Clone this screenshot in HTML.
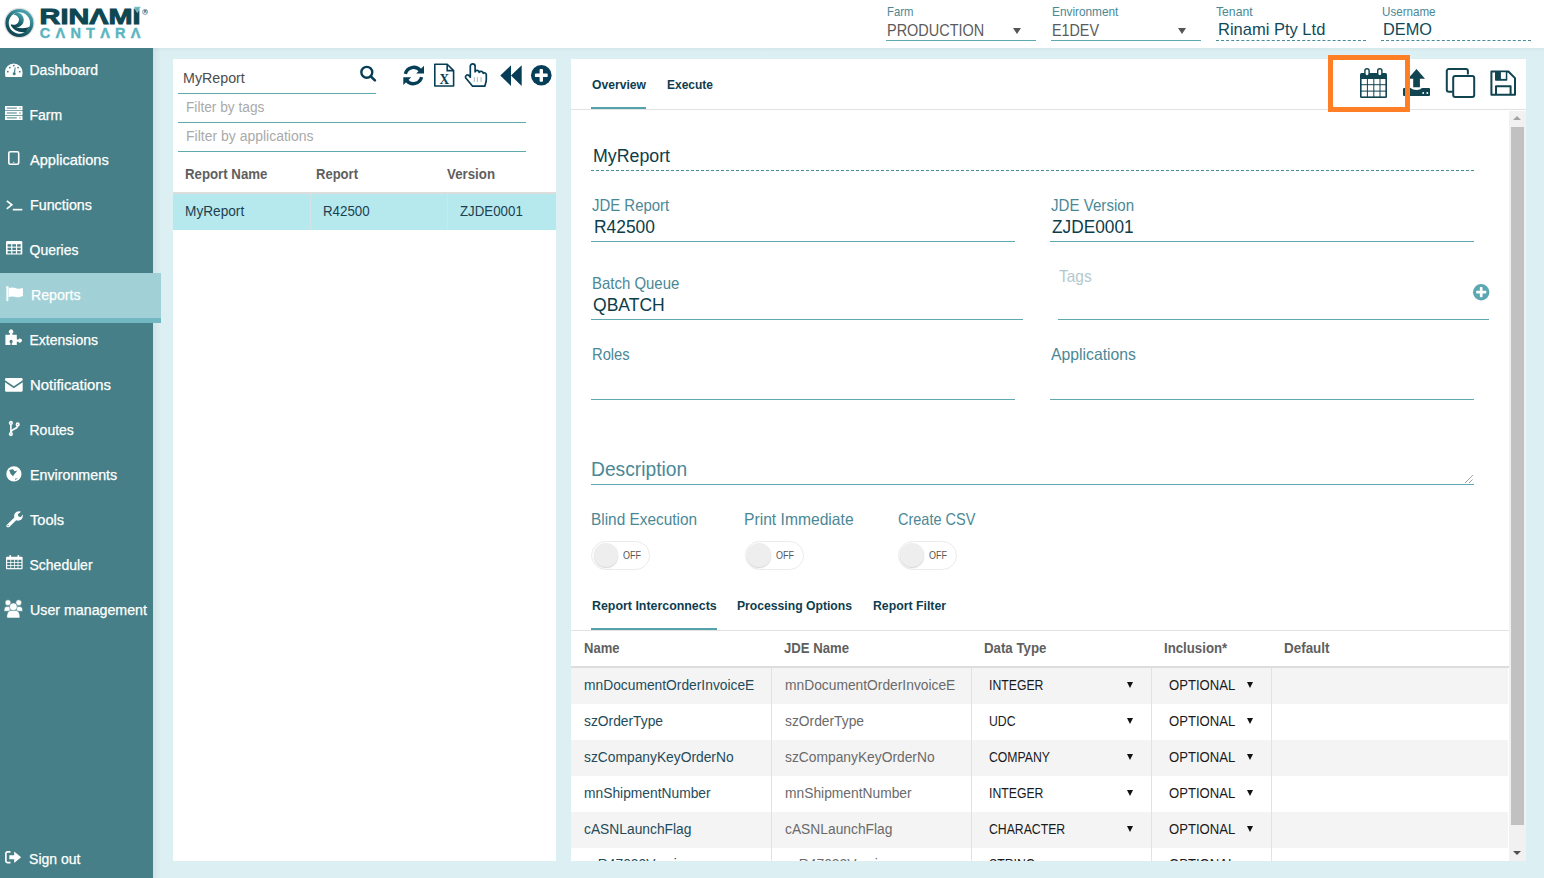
<!DOCTYPE html><html><head><meta charset="utf-8"><style>
html,body{margin:0;padding:0;width:1544px;height:878px;overflow:hidden;background:#fff;}
body{position:relative;font-family:"Liberation Sans",sans-serif;}
.t{position:absolute;white-space:nowrap;}
svg{position:absolute;overflow:visible}
</style></head><body>
<svg style="left:0.00px;top:0.00px" width="160.00" height="48.00" viewBox="0 0 160.00 48.00" ><defs><linearGradient id="lg" x1="0.8" y1="0" x2="0.2" y2="1"><stop offset="0" stop-color="#4fb0ba"/><stop offset="0.55" stop-color="#1d6672"/><stop offset="1" stop-color="#0b3f4b"/></linearGradient></defs>
<circle cx="19.4" cy="23" r="15.3" fill="#e2e0e0"/>
<circle cx="19.4" cy="23" r="14" fill="url(#lg)"/>
<circle cx="19.4" cy="23" r="10.7" fill="#fff"/>
<path d="M16.2,12.3 A7.6,7.6 0 1 1 10.7,25.2 L11.6,24.2 A5,5 0 1 0 13.4,14.8 Z" fill="url(#lg)"/>
<path d="M10.7,24.6 C12.5,30 18.5,33 25.5,32.2 L30.2,26.6 C25,29.3 16.5,29 10.7,24.6 Z" fill="#0e4651"/>
<text x="39.6" y="23.7" font-family="Liberation Sans" font-weight="bold" font-size="21.3" fill="#0e4651" stroke="#0e4651" stroke-width="0.9" textLength="101" lengthAdjust="spacingAndGlyphs">RIN&#923;MI</text>
<polygon points="133.7,6.8 140.9,6.8 137.3,12.6" fill="#5ab5c0" stroke="#fff" stroke-width="0.4"/>
<circle cx="145.1" cy="11.9" r="2.5" fill="none" stroke="#0e4651" stroke-width="0.5"/><text x="143.9" y="13.3" font-family="Liberation Sans" font-weight="bold" font-size="3.6" fill="#0e4651">R</text>
<text x="39.8" y="37.8" font-family="Liberation Sans" font-weight="bold" font-size="14.5" fill="#5ab5c0" stroke="#5ab5c0" stroke-width="0.4" textLength="100.6" lengthAdjust="spacing">C&#923;NT&#923;R&#923;</text></svg>
<div class="t" style="left:886.70px;top:5.00px;font-size:13.00px;line-height:13.00px;color:#4b8896;transform:scaleX(0.8706);transform-origin:0 0;">Farm</div>
<div class="t" style="left:886.70px;top:22.00px;font-size:17.00px;line-height:17.00px;color:#5b5b5b;transform:scaleX(0.8514);transform-origin:0 0;">PRODUCTION</div>
<div style="position:absolute;left:1013.00px;top:28.00px;width:8.00px;height:6.00px;background:none;border-left:4px solid transparent;border-right:4px solid transparent;border-top:6px solid #555;width:0;height:0;"></div>
<div style="position:absolute;left:886.00px;top:40.00px;width:150.00px;height:1.00px;background:#5fa9b3"></div>
<div class="t" style="left:1051.60px;top:5.00px;font-size:13.00px;line-height:13.00px;color:#4b8896;transform:scaleX(0.9097);transform-origin:0 0;">Environment</div>
<div class="t" style="left:1051.90px;top:22.00px;font-size:17.00px;line-height:17.00px;color:#5b5b5b;transform:scaleX(0.8429);transform-origin:0 0;">E1DEV</div>
<div style="position:absolute;left:1178.00px;top:28.00px;width:8.00px;height:6.00px;background:none;border-left:4px solid transparent;border-right:4px solid transparent;border-top:6px solid #555;width:0;height:0;"></div>
<div style="position:absolute;left:1051.00px;top:40.00px;width:150.00px;height:1.00px;background:#5fa9b3"></div>
<div class="t" style="left:1216.30px;top:5.00px;font-size:13.00px;line-height:13.00px;color:#4b8896;transform:scaleX(0.9377);transform-origin:0 0;">Tenant</div>
<div class="t" style="left:1218.00px;top:21.00px;font-size:17.00px;line-height:17.00px;color:#0f4a5a;transform:scaleX(0.9707);transform-origin:0 0;">Rinami Pty Ltd</div>
<div style="position:absolute;left:1216.00px;top:40.00px;width:150.00px;height:1.00px;border-top:1px dashed #4a8c96;height:0;"></div>
<div class="t" style="left:1381.60px;top:5.00px;font-size:13.00px;line-height:13.00px;color:#4b8896;transform:scaleX(0.8922);transform-origin:0 0;">Username</div>
<div class="t" style="left:1382.70px;top:21.00px;font-size:17.00px;line-height:17.00px;color:#0f4a5a;transform:scaleX(0.9608);transform-origin:0 0;">DEMO</div>
<div style="position:absolute;left:1381.00px;top:40.00px;width:150.00px;height:1.00px;border-top:1px dashed #4a8c96;height:0;"></div>
<div style="position:absolute;left:0.00px;top:48.00px;width:1544.00px;height:830.00px;background:#dcf0f3"></div>
<div style="position:absolute;left:153.00px;top:48.00px;width:1391.00px;height:4.00px;background:linear-gradient(rgba(0,0,0,0.035),rgba(0,0,0,0));"></div>
<div style="position:absolute;left:153.00px;top:48.00px;width:8.00px;height:830.00px;background:linear-gradient(90deg,rgba(0,0,0,0.06),rgba(0,0,0,0));"></div>
<div style="position:absolute;left:0.00px;top:48.00px;width:153.00px;height:830.00px;background:#467f87"></div>
<div style="position:absolute;left:0.00px;top:273.00px;width:161.00px;height:45.00px;background:#a1d1d7"></div>
<div style="position:absolute;left:0.00px;top:318.00px;width:161.00px;height:5.00px;background:#72b8c3"></div>
<div class="t" style="left:29.50px;top:63.00px;font-size:14.00px;line-height:14.00px;color:#ffffff;-webkit-text-stroke:0.25px #fff;">Dashboard</div>
<div class="t" style="left:29.50px;top:108.00px;font-size:14.00px;line-height:14.00px;color:#ffffff;-webkit-text-stroke:0.25px #fff;">Farm</div>
<div class="t" style="left:29.50px;top:153.00px;font-size:14.00px;line-height:14.00px;color:#ffffff;transform:scaleX(1.0425);transform-origin:0 0;-webkit-text-stroke:0.25px #fff;">Applications</div>
<div class="t" style="left:29.50px;top:198.00px;font-size:14.00px;line-height:14.00px;color:#ffffff;transform:scaleX(1.0199);transform-origin:0 0;-webkit-text-stroke:0.25px #fff;">Functions</div>
<div class="t" style="left:29.50px;top:243.00px;font-size:14.00px;line-height:14.00px;color:#ffffff;-webkit-text-stroke:0.25px #fff;">Queries</div>
<div class="t" style="left:30.90px;top:288.00px;font-size:14.00px;line-height:14.00px;color:#ffffff;transform:scaleX(1.0095);transform-origin:0 0;-webkit-text-stroke:0.25px #fff;">Reports</div>
<div class="t" style="left:29.50px;top:333.00px;font-size:14.00px;line-height:14.00px;color:#ffffff;-webkit-text-stroke:0.25px #fff;">Extensions</div>
<div class="t" style="left:29.50px;top:378.00px;font-size:14.00px;line-height:14.00px;color:#ffffff;transform:scaleX(1.0621);transform-origin:0 0;-webkit-text-stroke:0.25px #fff;">Notifications</div>
<div class="t" style="left:29.50px;top:423.00px;font-size:14.00px;line-height:14.00px;color:#ffffff;-webkit-text-stroke:0.25px #fff;">Routes</div>
<div class="t" style="left:29.50px;top:468.00px;font-size:14.00px;line-height:14.00px;color:#ffffff;transform:scaleX(1.0186);transform-origin:0 0;-webkit-text-stroke:0.25px #fff;">Environments</div>
<div class="t" style="left:29.50px;top:513.00px;font-size:14.00px;line-height:14.00px;color:#ffffff;transform:scaleX(1.0462);transform-origin:0 0;-webkit-text-stroke:0.25px #fff;">Tools</div>
<div class="t" style="left:29.50px;top:558.00px;font-size:14.00px;line-height:14.00px;color:#ffffff;-webkit-text-stroke:0.25px #fff;">Scheduler</div>
<div class="t" style="left:29.50px;top:603.00px;font-size:14.00px;line-height:14.00px;color:#ffffff;transform:scaleX(1.0158);transform-origin:0 0;-webkit-text-stroke:0.25px #fff;">User management</div>
<svg style="left:4.80px;top:62.60px" width="17.50" height="14.00" viewBox="0 0 17.50 14.00" ><path d="M0.6,14 C0.1,12.6 0,11 0,9.2 A8.75,8.75 0 0 1 17.5,9.2 C17.5,11 17.4,12.6 16.9,14 Z" fill="#fff"/>
<g fill="#467f87"><circle cx="4.8" cy="4.6" r="0.9"/><circle cx="8.8" cy="2.6" r="0.9"/><circle cx="13.1" cy="4.6" r="0.9"/><circle cx="2.8" cy="8.7" r="0.9"/><circle cx="14.7" cy="8.7" r="0.9"/><circle cx="9.2" cy="10.8" r="1.5"/><path d="M8.5,10.6 L9.8,4.2 L10.6,4.4 L10,10.9 Z"/></g></svg>
<svg style="left:4.80px;top:106.00px" width="17.50" height="14.00" viewBox="0 0 17.50 14.00" ><rect x="0" y="0" width="17.5" height="4.2" fill="#fff"/><rect x="0" y="4.9" width="17.5" height="4.2" fill="#fff"/><rect x="0" y="9.8" width="17.5" height="4.2" fill="#fff"/>
<g fill="#467f87"><rect x="1.8" y="1.6" width="10" height="1"/><rect x="1.8" y="6.5" width="10" height="1"/><rect x="1.8" y="11.4" width="10" height="1"/><circle cx="15" cy="2.1" r="0.7"/><circle cx="15" cy="7" r="0.7"/><circle cx="15" cy="11.9" r="0.7"/></g></svg>
<svg style="left:7.80px;top:151.00px" width="11.50" height="14.00" viewBox="0 0 11.50 14.00" ><rect x="0.8" y="0.8" width="9.9" height="12.4" rx="1.5" fill="none" stroke="#fff" stroke-width="1.6"/><circle cx="5.75" cy="11.3" r="0.6" fill="#fff"/></svg>
<svg style="left:5.50px;top:199.50px" width="16.50" height="11.00" viewBox="0 0 16.50 11.00" ><path d="M0.8,0.8 L5.8,4.8 L0.8,8.8" fill="none" stroke="#fff" stroke-width="1.7"/><rect x="6.8" y="8.8" width="9.5" height="1.7" fill="#fff"/></svg>
<svg style="left:5.50px;top:241.20px" width="16.30" height="13.60" viewBox="0 0 16.30 13.60" ><rect x="0" y="0" width="16.3" height="13.6" rx="1.2" fill="#fff"/>
<g fill="#467f87"><rect x="1.6" y="3.2" width="3.6" height="2.4"/><rect x="6.35" y="3.2" width="3.6" height="2.4"/><rect x="11.1" y="3.2" width="3.6" height="2.4"/>
<rect x="1.6" y="6.7" width="3.6" height="2.4"/><rect x="6.35" y="6.7" width="3.6" height="2.4"/><rect x="11.1" y="6.7" width="3.6" height="2.4"/>
<rect x="1.6" y="10.2" width="3.6" height="2.2"/><rect x="6.35" y="10.2" width="3.6" height="2.2"/><rect x="11.1" y="10.2" width="3.6" height="2.2"/></g></svg>
<svg style="left:6.40px;top:286.00px" width="17.50" height="15.50" viewBox="0 0 17.50 15.50" ><rect x="0.4" y="1" width="1.9" height="14.2" rx="0.6" fill="#fff"/><circle cx="1.35" cy="1.2" r="1.2" fill="#fff"/>
<path d="M2.5,2.2 C5,0.9 8,1.3 10.2,2.3 C12.5,3.3 14.6,2.6 16.9,1.9 L16.9,10.1 C14.6,10.9 12.4,11.9 10.2,11.1 C8,10.3 5,10.1 2.5,11 Z" fill="#fff"/></svg>
<svg style="left:5.20px;top:330.20px" width="17.50" height="15.30" viewBox="0 0 17.50 15.30" ><path d="M0.4,4.8 H4.9 V3.6 A2.2,2.2 0 1 1 7.3,3.6 V4.8 H11.8 V9.5 H13.3 A2,2 0 1 1 13.3,11.7 H11.8 V14.9 H6.8 V13 A1.6,1.6 0 1 0 5.4,13 V14.9 H0.4 Z" fill="#fff"/></svg>
<svg style="left:4.80px;top:377.50px" width="17.70" height="13.70" viewBox="0 0 17.70 13.70" ><path d="M0,1.5 A1.5,1.5 0 0 1 1.5,0 H16.2 A1.5,1.5 0 0 1 17.7,1.5 V2.2 L8.85,8.2 L0,2.2 Z" fill="#fff"/><path d="M0,4.3 L8.85,10.2 L17.7,4.3 V12.2 A1.5,1.5 0 0 1 16.2,13.7 H1.5 A1.5,1.5 0 0 1 0,12.2 Z" fill="#fff"/></svg>
<svg style="left:8.50px;top:421.20px" width="10.60" height="15.00" viewBox="0 0 10.60 15.00" ><g fill="none" stroke="#fff" stroke-width="1.6"><circle cx="1.9" cy="1.9" r="1.3"/><circle cx="8.7" cy="3.4" r="1.3"/><circle cx="1.9" cy="13.1" r="1.3"/><path d="M1.9,3.2 V11.8"/><path d="M8.7,4.7 C8.7,8 2.5,8 1.9,11"/></g></svg>
<svg style="left:5.70px;top:465.70px" width="16.10" height="15.90" viewBox="0 0 16.10 15.90" ><circle cx="7.9" cy="7.9" r="7.6" fill="#fff"/><path d="M3.2,4.3 C4.5,3.2 6,3.2 7.2,3.4 L8.6,5.3 L11.4,4.4 L8,8.8 L7,10.2 L4.6,7.8 Z M9,12.7 L12,12.3 L9.4,13.9 Z" fill="#467f87"/></svg>
<svg style="left:5.70px;top:511.20px" width="16.80" height="16.30" viewBox="0 0 16.80 16.30" ><path d="M1.2,13.5 L8.3,6.5 C7.5,3.5 9.5,0.3 13,0.3 C13.8,0.3 14.5,0.5 15,0.8 L11.8,3.2 L12.5,5.5 L14.8,6.2 L16.6,3.5 C16.8,4 16.8,4.5 16.8,5 C16.8,8.5 13.3,10.5 10.2,9.3 L3.3,15.9 C2.5,16.6 1.2,16.4 0.6,15.8 C0,15.2 0.3,14.2 1.2,13.5 Z" fill="#fff"/><circle cx="2.1" cy="14.6" r="0.7" fill="#467f87"/></svg>
<svg style="left:5.50px;top:554.80px" width="16.60" height="14.30" viewBox="0 0 16.60 14.30" ><rect x="0" y="1.8" width="16.6" height="12.5" rx="1" fill="#fff"/><rect x="3.3" y="0" width="1.8" height="3.6" rx="0.9" fill="#fff"/><rect x="11.5" y="0" width="1.8" height="3.6" rx="0.9" fill="#fff"/>
<g fill="#467f87"><rect x="1.2" y="4.8" width="3.2" height="2.2"/><rect x="5.2" y="4.8" width="2.8" height="2.2"/><rect x="8.8" y="4.8" width="2.8" height="2.2"/><rect x="12.4" y="4.8" width="3" height="2.2"/>
<rect x="1.2" y="7.8" width="3.2" height="2.3"/><rect x="5.2" y="7.8" width="2.8" height="2.3"/><rect x="8.8" y="7.8" width="2.8" height="2.3"/><rect x="12.4" y="7.8" width="3" height="2.3"/>
<rect x="1.2" y="10.9" width="3.2" height="2.2"/><rect x="5.2" y="10.9" width="2.8" height="2.2"/><rect x="8.8" y="10.9" width="2.8" height="2.2"/><rect x="12.4" y="10.9" width="3" height="2.2"/></g></svg>
<svg style="left:4.10px;top:599.80px" width="18.70" height="18.00" viewBox="0 0 18.70 18.00" ><g fill="#fff" stroke="#467f87" stroke-width="0.55"><circle cx="4" cy="2.7" r="2.9"/><circle cx="14.7" cy="2.7" r="2.9"/><path d="M0,11.2 C0,8 1,6.6 3,6.6 H6.5 C6,8 6,9.7 6.8,11.2 Z"/><path d="M18.7,11.2 C18.7,8 17.7,6.6 15.7,6.6 H12.2 C12.7,8 12.7,9.7 11.9,11.2 Z"/><path d="M2.8,17 C2.8,12.5 5,10.5 7,10.5 H11.7 C13.7,10.5 15.9,12.5 15.9,17 C15.9,17.6 15.5,18 14.9,18 H3.8 C3.2,18 2.8,17.6 2.8,17 Z"/><circle cx="9.35" cy="6.8" r="3.9"/></g></svg>
<svg style="left:5.20px;top:851.40px" width="16.10" height="12.50" viewBox="0 0 16.10 12.50" ><path d="M5.5,0.9 H2.5 C1.5,0.9 0.9,1.5 0.9,2.5 V10 C0.9,11 1.5,11.6 2.5,11.6 H5.5" fill="none" stroke="#fff" stroke-width="1.7"/><path d="M4.3,4.2 H9.2 V0.5 L16.1,6.25 L9.2,12 V8.3 H4.3 Z" fill="#fff"/></svg>
<div class="t" style="left:29.10px;top:852.00px;font-size:14.00px;line-height:14.00px;color:#ffffff;-webkit-text-stroke:0.25px #fff;">Sign out</div>
<div style="position:absolute;left:173.00px;top:59.00px;width:383.00px;height:802.00px;background:#fff"></div>
<div class="t" style="left:183.40px;top:71.00px;font-size:14.00px;line-height:14.00px;color:#4d4d4d;transform:scaleX(1.0183);transform-origin:0 0;">MyReport</div>
<div style="position:absolute;left:178.00px;top:93.00px;width:198.00px;height:1.00px;background:#5fa9b3"></div>
<div class="t" style="left:185.90px;top:100.00px;font-size:14.00px;line-height:14.00px;color:#aaaaaa;transform:scaleX(0.9782);transform-origin:0 0;">Filter by tags</div>
<div style="position:absolute;left:178.00px;top:122.00px;width:348.00px;height:1.00px;background:#5fa9b3"></div>
<div class="t" style="left:185.90px;top:129.00px;font-size:14.00px;line-height:14.00px;color:#aaaaaa;transform:scaleX(0.9991);transform-origin:0 0;">Filter by applications</div>
<div style="position:absolute;left:178.00px;top:151.00px;width:348.00px;height:1.00px;background:#5fa9b3"></div>
<svg style="left:358.50px;top:64.50px" width="18.50" height="18.00" viewBox="0 0 18.50 18.00" ><circle cx="7.8" cy="7.3" r="5.45" fill="none" stroke="#063d57" stroke-width="2.4"/><path d="M11.8,11.4 L15.9,15.4" stroke="#063d57" stroke-width="2.6" stroke-linecap="round"/></svg>
<svg style="left:403.00px;top:65.00px" width="21.50" height="21.00" viewBox="0 0 21.50 21.00" ><g fill="none" stroke="#063d57" stroke-width="3.3"><path d="M2.4,8.8 A8.5,8.5 0 0 1 17.2,5.4"/><path d="M18.6,12.2 A8.5,8.5 0 0 1 3.8,15.6"/></g><polygon points="21,0.8 21,8.6 13.2,8.6" fill="#063d57"/><polygon points="0.3,12.2 8.2,12.2 0.3,20" fill="#063d57"/></svg>
<svg style="left:433.00px;top:63.00px" width="22.00" height="25.00" viewBox="0 0 22.00 25.00" ><path d="M1.8,1.2 H14.2 L20.6,7.6 V23 H1.8 Z" fill="none" stroke="#063d57" stroke-width="1.6" stroke-linejoin="round"/><path d="M14.2,1.2 V7.6 H20.6" fill="none" stroke="#063d57" stroke-width="1.6"/><text x="6.6" y="20.7" font-family="Liberation Serif" font-weight="bold" font-size="14.5" fill="#063d57" textLength="9.6" lengthAdjust="spacingAndGlyphs">X</text></svg>
<svg style="left:464.30px;top:63.00px" width="23.00" height="24.50" viewBox="0 0 23.00 24.50" ><path d="M6.3,14.2 V3.3 A2.4,2.4 0 0 1 11.1,3.3 V8.8 A2.1,2.1 0 0 1 15.2,9.4 A2.1,2.1 0 0 1 19.1,10.2 A2,2 0 0 1 22.3,11.6 V16.5 C22.3,19 21.5,20.5 20.8,23.2 H8.6 L1.6,14.8 A2.1,2.1 0 0 1 4.8,12.4 Z" fill="none" stroke="#063d57" stroke-width="1.7" stroke-linejoin="round"/><g stroke="#063d57" stroke-width="0.8" opacity="0.45"><path d="M10.3,14.2 V19"/><path d="M13.4,14.2 V19"/><path d="M17.1,14.2 V19"/></g></svg>
<svg style="left:499.50px;top:65.00px" width="22.00" height="21.50" viewBox="0 0 22.00 21.50" ><polygon points="0.3,10.6 11,0.3 11,21" fill="#063d57"/><polygon points="11,10.6 21.7,0.3 21.7,21" fill="#063d57"/></svg>
<svg style="left:529.80px;top:64.20px" width="22.60" height="22.60" viewBox="0 0 22.60 22.60" ><circle cx="11.30" cy="11.30" r="10.30" fill="#063d57"/><rect x="4.91" y="9.60" width="12.77" height="3.40" rx="0.85" fill="#fff"/><rect x="9.60" y="4.91" width="3.40" height="12.77" rx="0.85" fill="#fff"/></svg>
<div class="t" style="left:185.25px;top:167.00px;font-size:14.00px;line-height:14.00px;color:#5f5f5f;font-weight:bold;transform:scaleX(0.9455);transform-origin:0 0;">Report Name</div>
<div class="t" style="left:316.00px;top:167.00px;font-size:14.00px;line-height:14.00px;color:#5f5f5f;font-weight:bold;transform:scaleX(0.9310);transform-origin:0 0;">Report</div>
<div class="t" style="left:447.00px;top:167.00px;font-size:14.00px;line-height:14.00px;color:#5f5f5f;font-weight:bold;transform:scaleX(0.9491);transform-origin:0 0;">Version</div>
<div style="position:absolute;left:173.00px;top:192.00px;width:383.00px;height:2.00px;background:#dddddd"></div>
<div style="position:absolute;left:173.00px;top:194.00px;width:383.00px;height:36.00px;background:#b5e9ee"></div>
<div style="position:absolute;left:310.00px;top:194.00px;width:1.00px;height:36.00px;background:#d4e4e6"></div>
<div style="position:absolute;left:447.00px;top:194.00px;width:1.00px;height:36.00px;background:#d4e4e6"></div>
<div class="t" style="left:184.80px;top:204.00px;font-size:14.00px;line-height:14.00px;color:#1d3e50;transform:scaleX(0.9754);transform-origin:0 0;">MyReport</div>
<div class="t" style="left:323.30px;top:204.00px;font-size:14.00px;line-height:14.00px;color:#1d3e50;transform:scaleX(0.9503);transform-origin:0 0;">R42500</div>
<div class="t" style="left:460.00px;top:204.00px;font-size:14.00px;line-height:14.00px;color:#1d3e50;transform:scaleX(0.9494);transform-origin:0 0;">ZJDE0001</div>
<div style="position:absolute;left:571.00px;top:59.00px;width:955.00px;height:802.00px;background:#fff"></div>
<div class="t" style="left:591.70px;top:78.00px;font-size:13.00px;line-height:13.00px;color:#0e3d4f;font-weight:bold;transform:scaleX(0.9334);transform-origin:0 0;">Overview</div>
<div class="t" style="left:666.90px;top:78.00px;font-size:13.00px;line-height:13.00px;color:#0e3d4f;font-weight:bold;transform:scaleX(0.9227);transform-origin:0 0;">Execute</div>
<div style="position:absolute;left:591.00px;top:107.00px;width:55.00px;height:2.00px;background:#54a2ac"></div>
<div style="position:absolute;left:571.00px;top:109.00px;width:955.00px;height:1.00px;background:#e2e2e2"></div>
<svg style="left:1360.00px;top:68.00px" width="27.00" height="30.00" viewBox="0 0 27.00 30.00" ><rect x="0" y="5" width="27" height="25" rx="1.5" fill="#0f4450"/><rect x="1.60" y="11.00" width="5.30" height="5.20" fill="#fff"/><rect x="1.60" y="17.20" width="5.30" height="5.40" fill="#fff"/><rect x="1.60" y="23.60" width="5.30" height="4.80" fill="#fff"/><rect x="7.90" y="11.00" width="5.40" height="5.20" fill="#fff"/><rect x="7.90" y="17.20" width="5.40" height="5.40" fill="#fff"/><rect x="7.90" y="23.60" width="5.40" height="4.80" fill="#fff"/><rect x="14.30" y="11.00" width="5.20" height="5.20" fill="#fff"/><rect x="14.30" y="17.20" width="5.20" height="5.40" fill="#fff"/><rect x="14.30" y="23.60" width="5.20" height="4.80" fill="#fff"/><rect x="20.50" y="11.00" width="4.90" height="5.20" fill="#fff"/><rect x="20.50" y="17.20" width="4.90" height="5.40" fill="#fff"/><rect x="20.50" y="23.60" width="4.90" height="4.80" fill="#fff"/><rect x="4.2" y="0" width="5.6" height="8.5" rx="2.8" fill="#0f4450"/><rect x="5.6" y="1.4" width="2.8" height="5.8" rx="1.4" fill="#fff"/><rect x="17" y="0" width="5.6" height="8.5" rx="2.8" fill="#0f4450"/><rect x="18.4" y="1.4" width="2.8" height="5.8" rx="1.4" fill="#fff"/></svg>
<svg style="left:1403.00px;top:69.00px" width="27.00" height="27.00" viewBox="0 0 27.00 27.00" ><polygon points="13.5,0 22,9.7 16.9,9.7 16.9,18.3 10.2,18.3 10.2,9.7 5,9.7" fill="#0f4450"/><path d="M1,19 H7.6 C9,20.3 11,20.9 13.6,20.9 C16.2,20.9 17.6,20.3 19,19 H26 A1,1 0 0 1 27,20 V25.9 A1,1 0 0 1 26,26.9 H1 A1,1 0 0 1 0,25.9 V20 A1,1 0 0 1 1,19 Z" fill="#0f4450"/><circle cx="20.2" cy="24" r="0.95" fill="#fff"/><circle cx="24.3" cy="24" r="0.95" fill="#fff"/></svg>
<svg style="left:1445.00px;top:67.00px" width="31.00" height="32.00" viewBox="0 0 31.00 32.00" ><path d="M22.9,7.6 V4 A2,2 0 0 0 20.9,2 H3.8 A2,2 0 0 0 1.8,4 V22.8 A2,2 0 0 0 3.8,24.8 H7.8" fill="none" stroke="#0f4450" stroke-width="2"/><rect x="8.2" y="9" width="21" height="20.9" rx="2" fill="none" stroke="#0f4450" stroke-width="2"/></svg>
<svg style="left:1490.00px;top:70.00px" width="27.00" height="26.50" viewBox="0 0 27.00 26.50" ><path d="M1.4,1.5 H18.4 L25,8.1 V24.8 H1.4 Z" fill="none" stroke="#0f4450" stroke-width="2" stroke-linejoin="round"/><rect x="5" y="1.4" width="12.3" height="9.3" rx="0.8" fill="#0f4450"/><rect x="10.9" y="2.2" width="4.9" height="6.7" fill="#fff"/><path d="M6,24.8 V16.3 H20.6 V24.8" fill="none" stroke="#0f4450" stroke-width="2" stroke-linejoin="round"/></svg>
<div style="position:absolute;left:1509.00px;top:111.00px;width:17.00px;height:750.00px;background:#f1f1f1"></div>
<div style="position:absolute;left:1511.00px;top:127.00px;width:13.00px;height:698.00px;background:#c1c1c1"></div>
<div style="position:absolute;left:1513.00px;top:116.00px;width:0.00px;height:0.00px;border-left:4px solid transparent;border-right:4px solid transparent;border-bottom:4px solid #a3a3a3;"></div>
<div style="position:absolute;left:1513.00px;top:851.00px;width:0.00px;height:0.00px;border-left:4px solid transparent;border-right:4px solid transparent;border-top:4px solid #505050;"></div>
<div class="t" style="left:593.40px;top:147.00px;font-size:18.00px;line-height:18.00px;color:#0d3d4a;transform:scaleX(0.9868);transform-origin:0 0;">MyReport</div>
<div style="position:absolute;left:591.00px;top:170.00px;width:883.00px;height:1.00px;border-top:1px dashed #4a8c96;height:0;"></div>
<div class="t" style="left:591.80px;top:197.00px;font-size:16.50px;line-height:16.50px;color:#4b8896;transform:scaleX(0.9054);transform-origin:0 0;">JDE Report</div>
<div class="t" style="left:593.50px;top:218.00px;font-size:18.00px;line-height:18.00px;color:#0d3d4a;transform:scaleX(0.9660);transform-origin:0 0;">R42500</div>
<div style="position:absolute;left:591.00px;top:241.00px;width:424.00px;height:1.00px;background:#5fa9b3"></div>
<div class="t" style="left:1050.50px;top:197.00px;font-size:16.50px;line-height:16.50px;color:#4b8896;transform:scaleX(0.9153);transform-origin:0 0;">JDE Version</div>
<div class="t" style="left:1051.65px;top:218.00px;font-size:18.00px;line-height:18.00px;color:#0d3d4a;transform:scaleX(0.9594);transform-origin:0 0;">ZJDE0001</div>
<div style="position:absolute;left:1050.00px;top:241.00px;width:424.00px;height:1.00px;background:#5fa9b3"></div>
<div class="t" style="left:592.45px;top:275.00px;font-size:16.50px;line-height:16.50px;color:#4b8896;transform:scaleX(0.9064);transform-origin:0 0;">Batch Queue</div>
<div class="t" style="left:593.10px;top:296.00px;font-size:18.00px;line-height:18.00px;color:#0d3d4a;transform:scaleX(0.9733);transform-origin:0 0;">QBATCH</div>
<div style="position:absolute;left:591.00px;top:319.00px;width:432.00px;height:1.00px;background:#5fa9b3"></div>
<div class="t" style="left:1058.50px;top:268.00px;font-size:16.50px;line-height:16.50px;color:#b3c8cc;transform:scaleX(0.9353);transform-origin:0 0;">Tags</div>
<svg style="left:1471.60px;top:283.20px" width="18.40" height="18.40" viewBox="0 0 18.40 18.40" ><circle cx="9.20" cy="9.20" r="8.20" fill="#5ba7b2"/><rect x="4.12" y="7.85" width="10.17" height="2.71" rx="0.68" fill="#fff"/><rect x="7.85" y="4.12" width="2.71" height="10.17" rx="0.68" fill="#fff"/></svg>
<div style="position:absolute;left:1058.00px;top:319.00px;width:431.00px;height:1.00px;background:#5fa9b3"></div>
<div class="t" style="left:592.40px;top:346.00px;font-size:16.50px;line-height:16.50px;color:#4b8896;transform:scaleX(0.8934);transform-origin:0 0;">Roles</div>
<div style="position:absolute;left:591.00px;top:399.00px;width:424.00px;height:1.00px;background:#5fa9b3"></div>
<div class="t" style="left:1051.30px;top:346.00px;font-size:16.50px;line-height:16.50px;color:#4b8896;transform:scaleX(0.9553);transform-origin:0 0;">Applications</div>
<div style="position:absolute;left:1050.00px;top:399.00px;width:424.00px;height:1.00px;background:#5fa9b3"></div>
<div class="t" style="left:591.30px;top:459.00px;font-size:20.00px;line-height:20.00px;color:#4b8896;transform:scaleX(0.9615);transform-origin:0 0;">Description</div>
<div style="position:absolute;left:591.00px;top:484.00px;width:883.00px;height:1.00px;background:#5fa9b3"></div>
<svg style="left:1464.00px;top:474.00px" width="10.00" height="10.00" viewBox="0 0 10.00 10.00" ><path d="M1.4,8.6 L8.6,1.4 M5.4,8.6 L8.6,5.4" stroke="#555" stroke-width="1" stroke-dasharray="1 0.5"/></svg>
<div class="t" style="left:591.40px;top:511.00px;font-size:16.50px;line-height:16.50px;color:#4b8896;transform:scaleX(0.9321);transform-origin:0 0;">Blind Execution</div>
<div class="t" style="left:744.20px;top:511.00px;font-size:16.50px;line-height:16.50px;color:#4b8896;transform:scaleX(0.9486);transform-origin:0 0;">Print Immediate</div>
<div class="t" style="left:897.50px;top:511.00px;font-size:16.50px;line-height:16.50px;color:#4b8896;transform:scaleX(0.8781);transform-origin:0 0;">Create CSV</div>
<div style="position:absolute;left:591.20px;top:540.50px;width:57px;height:27.5px;border:1px solid #ebebeb;border-radius:15px;background:#fff"></div><div style="position:absolute;left:594.00px;top:542.90px;width:24px;height:24px;border-radius:12px;background:#eeeeee;box-shadow:0 1px 1.5px rgba(0,0,0,0.18)"></div><div class="t" style="left:622.50px;top:550.50px;font-size:10px;line-height:10px;color:#555;transform:scaleX(0.9);transform-origin:0 0">OFF</div>
<div style="position:absolute;left:744.50px;top:540.50px;width:57px;height:27.5px;border:1px solid #ebebeb;border-radius:15px;background:#fff"></div><div style="position:absolute;left:747.30px;top:542.90px;width:24px;height:24px;border-radius:12px;background:#eeeeee;box-shadow:0 1px 1.5px rgba(0,0,0,0.18)"></div><div class="t" style="left:775.80px;top:550.50px;font-size:10px;line-height:10px;color:#555;transform:scaleX(0.9);transform-origin:0 0">OFF</div>
<div style="position:absolute;left:897.50px;top:540.50px;width:57px;height:27.5px;border:1px solid #ebebeb;border-radius:15px;background:#fff"></div><div style="position:absolute;left:900.30px;top:542.90px;width:24px;height:24px;border-radius:12px;background:#eeeeee;box-shadow:0 1px 1.5px rgba(0,0,0,0.18)"></div><div class="t" style="left:928.80px;top:550.50px;font-size:10px;line-height:10px;color:#555;transform:scaleX(0.9);transform-origin:0 0">OFF</div>
<div class="t" style="left:591.90px;top:599.00px;font-size:13.00px;line-height:13.00px;color:#0e3d4f;font-weight:bold;transform:scaleX(0.9537);transform-origin:0 0;">Report Interconnects</div>
<div class="t" style="left:737.00px;top:599.00px;font-size:13.00px;line-height:13.00px;color:#0e3d4f;font-weight:bold;transform:scaleX(0.9363);transform-origin:0 0;">Processing Options</div>
<div class="t" style="left:873.40px;top:599.00px;font-size:13.00px;line-height:13.00px;color:#0e3d4f;font-weight:bold;transform:scaleX(0.9446);transform-origin:0 0;">Report Filter</div>
<div style="position:absolute;left:591.00px;top:628.00px;width:126.00px;height:2.00px;background:#54a2ac"></div>
<div style="position:absolute;left:571.00px;top:630.00px;width:938.00px;height:1.00px;background:#e2e2e2"></div>
<div class="t" style="left:584.00px;top:641.00px;font-size:14.00px;line-height:14.00px;color:#5f5f5f;font-weight:bold;transform:scaleX(0.9314);transform-origin:0 0;">Name</div>
<div class="t" style="left:783.90px;top:641.00px;font-size:14.00px;line-height:14.00px;color:#5f5f5f;font-weight:bold;transform:scaleX(0.9384);transform-origin:0 0;">JDE Name</div>
<div class="t" style="left:983.70px;top:641.00px;font-size:14.00px;line-height:14.00px;color:#5f5f5f;font-weight:bold;transform:scaleX(0.9473);transform-origin:0 0;">Data Type</div>
<div class="t" style="left:1163.80px;top:641.00px;font-size:14.00px;line-height:14.00px;color:#5f5f5f;font-weight:bold;transform:scaleX(0.9444);transform-origin:0 0;">Inclusion*</div>
<div class="t" style="left:1284.00px;top:641.00px;font-size:14.00px;line-height:14.00px;color:#5f5f5f;font-weight:bold;transform:scaleX(0.9587);transform-origin:0 0;">Default</div>
<div style="position:absolute;left:571.00px;top:666.00px;width:938.00px;height:2.00px;background:#dddddd"></div>
<div style="position:absolute;left:0;top:0;width:1544px;height:861px;overflow:hidden">
<div style="position:absolute;left:571.00px;top:668.00px;width:937.00px;height:36.00px;background:#f4f4f4"></div>
<div style="position:absolute;left:571.00px;top:740.00px;width:937.00px;height:36.00px;background:#f4f4f4"></div>
<div style="position:absolute;left:571.00px;top:812.00px;width:937.00px;height:36.00px;background:#f4f4f4"></div>
<div style="position:absolute;left:771.00px;top:668.00px;width:1.00px;height:193.00px;background:#e2e2e2"></div>
<div style="position:absolute;left:971.00px;top:668.00px;width:1.00px;height:193.00px;background:#e2e2e2"></div>
<div style="position:absolute;left:1151.00px;top:668.00px;width:1.00px;height:193.00px;background:#e2e2e2"></div>
<div style="position:absolute;left:1271.00px;top:668.00px;width:1.00px;height:193.00px;background:#e2e2e2"></div>
<div class="t" style="left:584.00px;top:678.00px;font-size:14.00px;line-height:14.00px;color:#1f4b5b;transform:scaleX(0.9860);transform-origin:0 0;">mnDocumentOrderInvoiceE</div>
<div class="t" style="left:784.80px;top:678.00px;font-size:14.00px;line-height:14.00px;color:#6a6a6a;transform:scaleX(0.9860);transform-origin:0 0;">mnDocumentOrderInvoiceE</div>
<div class="t" style="left:989.10px;top:678.00px;font-size:14.00px;line-height:14.00px;color:#1a1a1a;transform:scaleX(0.8746);transform-origin:0 0;">INTEGER</div>
<div style="position:absolute;left:1127.00px;top:682.00px;width:0.00px;height:0.00px;border-left:3px solid transparent;border-right:3px solid transparent;border-top:6px solid #111;"></div>
<div class="t" style="left:1168.50px;top:678.00px;font-size:14.00px;line-height:14.00px;color:#1a1a1a;transform:scaleX(0.9364);transform-origin:0 0;">OPTIONAL</div>
<div style="position:absolute;left:1247.00px;top:682.00px;width:0.00px;height:0.00px;border-left:3px solid transparent;border-right:3px solid transparent;border-top:6px solid #111;"></div>
<div class="t" style="left:584.00px;top:714.00px;font-size:14.00px;line-height:14.00px;color:#1f4b5b;transform:scaleX(0.9860);transform-origin:0 0;">szOrderType</div>
<div class="t" style="left:784.80px;top:714.00px;font-size:14.00px;line-height:14.00px;color:#6a6a6a;transform:scaleX(0.9860);transform-origin:0 0;">szOrderType</div>
<div class="t" style="left:989.10px;top:714.00px;font-size:14.00px;line-height:14.00px;color:#1a1a1a;transform:scaleX(0.8746);transform-origin:0 0;">UDC</div>
<div style="position:absolute;left:1127.00px;top:718.00px;width:0.00px;height:0.00px;border-left:3px solid transparent;border-right:3px solid transparent;border-top:6px solid #111;"></div>
<div class="t" style="left:1168.50px;top:714.00px;font-size:14.00px;line-height:14.00px;color:#1a1a1a;transform:scaleX(0.9364);transform-origin:0 0;">OPTIONAL</div>
<div style="position:absolute;left:1247.00px;top:718.00px;width:0.00px;height:0.00px;border-left:3px solid transparent;border-right:3px solid transparent;border-top:6px solid #111;"></div>
<div class="t" style="left:584.00px;top:750.00px;font-size:14.00px;line-height:14.00px;color:#1f4b5b;transform:scaleX(0.9860);transform-origin:0 0;">szCompanyKeyOrderNo</div>
<div class="t" style="left:784.80px;top:750.00px;font-size:14.00px;line-height:14.00px;color:#6a6a6a;transform:scaleX(0.9860);transform-origin:0 0;">szCompanyKeyOrderNo</div>
<div class="t" style="left:989.10px;top:750.00px;font-size:14.00px;line-height:14.00px;color:#1a1a1a;transform:scaleX(0.8746);transform-origin:0 0;">COMPANY</div>
<div style="position:absolute;left:1127.00px;top:754.00px;width:0.00px;height:0.00px;border-left:3px solid transparent;border-right:3px solid transparent;border-top:6px solid #111;"></div>
<div class="t" style="left:1168.50px;top:750.00px;font-size:14.00px;line-height:14.00px;color:#1a1a1a;transform:scaleX(0.9364);transform-origin:0 0;">OPTIONAL</div>
<div style="position:absolute;left:1247.00px;top:754.00px;width:0.00px;height:0.00px;border-left:3px solid transparent;border-right:3px solid transparent;border-top:6px solid #111;"></div>
<div class="t" style="left:584.00px;top:786.00px;font-size:14.00px;line-height:14.00px;color:#1f4b5b;transform:scaleX(0.9860);transform-origin:0 0;">mnShipmentNumber</div>
<div class="t" style="left:784.80px;top:786.00px;font-size:14.00px;line-height:14.00px;color:#6a6a6a;transform:scaleX(0.9860);transform-origin:0 0;">mnShipmentNumber</div>
<div class="t" style="left:989.10px;top:786.00px;font-size:14.00px;line-height:14.00px;color:#1a1a1a;transform:scaleX(0.8746);transform-origin:0 0;">INTEGER</div>
<div style="position:absolute;left:1127.00px;top:790.00px;width:0.00px;height:0.00px;border-left:3px solid transparent;border-right:3px solid transparent;border-top:6px solid #111;"></div>
<div class="t" style="left:1168.50px;top:786.00px;font-size:14.00px;line-height:14.00px;color:#1a1a1a;transform:scaleX(0.9364);transform-origin:0 0;">OPTIONAL</div>
<div style="position:absolute;left:1247.00px;top:790.00px;width:0.00px;height:0.00px;border-left:3px solid transparent;border-right:3px solid transparent;border-top:6px solid #111;"></div>
<div class="t" style="left:584.00px;top:822.00px;font-size:14.00px;line-height:14.00px;color:#1f4b5b;transform:scaleX(0.9860);transform-origin:0 0;">cASNLaunchFlag</div>
<div class="t" style="left:784.80px;top:822.00px;font-size:14.00px;line-height:14.00px;color:#6a6a6a;transform:scaleX(0.9860);transform-origin:0 0;">cASNLaunchFlag</div>
<div class="t" style="left:989.10px;top:822.00px;font-size:14.00px;line-height:14.00px;color:#1a1a1a;transform:scaleX(0.8746);transform-origin:0 0;">CHARACTER</div>
<div style="position:absolute;left:1127.00px;top:826.00px;width:0.00px;height:0.00px;border-left:3px solid transparent;border-right:3px solid transparent;border-top:6px solid #111;"></div>
<div class="t" style="left:1168.50px;top:822.00px;font-size:14.00px;line-height:14.00px;color:#1a1a1a;transform:scaleX(0.9364);transform-origin:0 0;">OPTIONAL</div>
<div style="position:absolute;left:1247.00px;top:826.00px;width:0.00px;height:0.00px;border-left:3px solid transparent;border-right:3px solid transparent;border-top:6px solid #111;"></div>
<div class="t" style="left:584.00px;top:857.00px;font-size:14.00px;line-height:14.00px;color:#1f4b5b;transform:scaleX(0.9860);transform-origin:0 0;">szR47032Version</div>
<div class="t" style="left:784.80px;top:857.00px;font-size:14.00px;line-height:14.00px;color:#6a6a6a;transform:scaleX(0.9860);transform-origin:0 0;">szR47032Version</div>
<div class="t" style="left:989.10px;top:857.00px;font-size:14.00px;line-height:14.00px;color:#1a1a1a;transform:scaleX(0.8746);transform-origin:0 0;">STRING</div>
<div style="position:absolute;left:1127.00px;top:861.00px;width:0.00px;height:0.00px;border-left:3px solid transparent;border-right:3px solid transparent;border-top:6px solid #111;"></div>
<div class="t" style="left:1168.50px;top:857.00px;font-size:14.00px;line-height:14.00px;color:#1a1a1a;transform:scaleX(0.9364);transform-origin:0 0;">OPTIONAL</div>
<div style="position:absolute;left:1247.00px;top:861.00px;width:0.00px;height:0.00px;border-left:3px solid transparent;border-right:3px solid transparent;border-top:6px solid #111;"></div>
</div>
<div style="position:absolute;left:1328px;top:55px;width:72px;height:47px;border:5px solid #fe7f26;"></div>
</body></html>
